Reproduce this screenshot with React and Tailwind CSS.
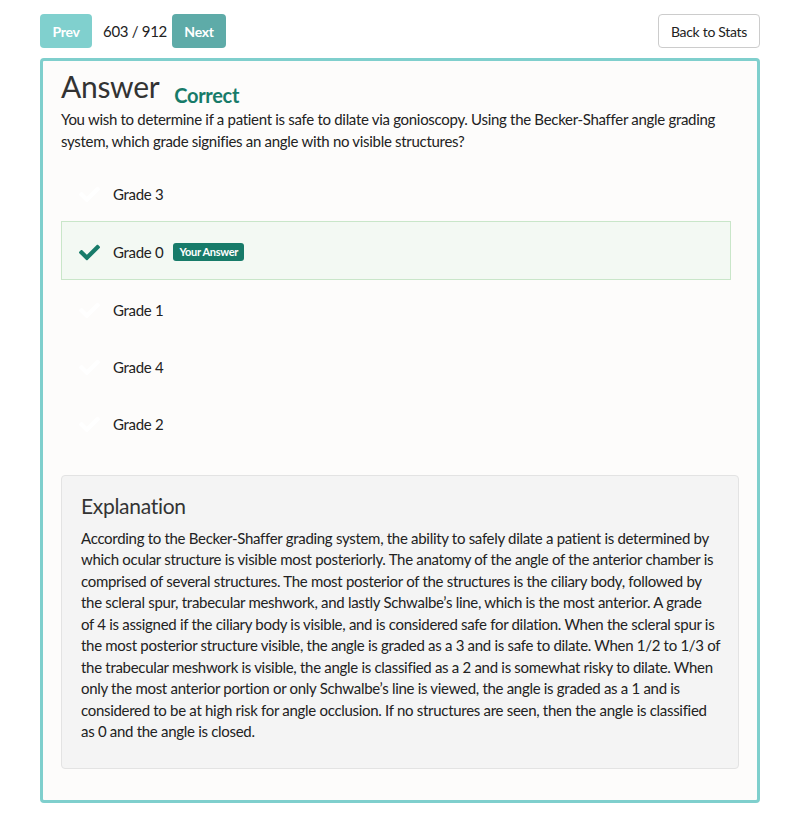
import React from "react";
import { FaCheck } from "react-icons/fa";

const options = [
  { label: "Grade 3" },
  { label: "Grade 0", selected: true },
  { label: "Grade 1" },
  { label: "Grade 4" },
  { label: "Grade 2" },
];

const explanation = [
  "According to the Becker-Shaffer grading system, the ability to safely dilate a patient is determined by",
  "which ocular structure is visible most posteriorly. The anatomy of the angle of the anterior chamber is",
  "comprised of several structures. The most posterior of the structures is the ciliary body, followed by",
  "the scleral spur, trabecular meshwork, and lastly Schwalbe’s line, which is the most anterior. A grade",
  "of 4 is assigned if the ciliary body is visible, and is considered safe for dilation. When the scleral spur is",
  "the most posterior structure visible, the angle is graded as a 3 and is safe to dilate. When 1/2 to 1/3 of",
  "the trabecular meshwork is visible, the angle is classified as a 2 and is somewhat risky to dilate. When",
  "only the most anterior portion or only Schwalbe’s line is viewed, the angle is graded as a 1 and is",
  "considered to be at high risk for angle occlusion. If no structures are seen, then the angle is classified",
  "as 0 and the angle is closed.",
];

export default function App() {
  return (
    <div className="w-[800px] min-h-[826px] bg-white text-[#333] tracking-[-0.3px]" style={{ fontFamily: "Lato, 'Open Sans', sans-serif" }}>
      <div className="px-[40px] pt-[14px]">
        <div className="flex items-center justify-between h-[34px]">
          <div className="flex items-center">
            <button className="h-[34px] w-[52px] rounded-[4px] bg-[#80d0ce] text-white font-bold text-[14px]">Prev</button>
            <span className="ml-[11px] w-[69px] text-[15px] text-[#222]">603 / 912</span>
            <button className="h-[34px] w-[54px] rounded-[4px] bg-[#5eaba8] text-white font-bold text-[14px]">Next</button>
          </div>
          <button className="h-[34px] w-[102px] rounded-[4px] border border-[#ccc] bg-white text-[14px] text-[#222]">Back to Stats</button>
        </div>
        <div className="mt-[10px] border-[3px] border-[#7fcfcd] rounded-[4px] bg-[#fdfcfb] pl-[18px] pr-[18px] pt-[7px] pb-[31px]">
          <div className="flex items-end">
            <h1 className="text-[30px] leading-[36px] text-[#333]">Answer</h1>
            <span className="ml-[15px] mb-[-6px] text-[20px] font-bold text-[#177b69]">Correct</span>
          </div>
          <p className="mt-[4px] text-[15px] leading-[22px] text-[#222] pr-[10px]">
            You wish to determine if a patient is safe to dilate via gonioscopy. Using the Becker-Shaffer angle grading system, which grade signifies an angle with no visible structures?
          </p>
          <div className="mt-[14px] w-[670px]">
            {options.map((o) => (
              <div
                key={o.label}
                className={
                  "flex items-center pl-[17px] " +
                  (o.selected
                    ? "bg-[#f3f9f3] border border-[#c9e6c9] h-[59px] mt-[-2px] mb-[2px] pt-[3px]"
                    : "border border-transparent h-[57px]")
                }
              >
                <FaCheck className={"text-[21px] " + (o.selected ? "text-[#177b69]" : "text-white")} />
                <span className="ml-[13px] text-[15px] text-[#222]">{o.label}</span>
                {o.selected && (
                  <span className="ml-[10px] rounded-[3px] bg-[#177b69] px-[6px] py-[2px] text-[11px] font-bold text-white leading-[14px]">
                    Your Answer
                  </span>
                )}
              </div>
            ))}
          </div>
          <div className="mt-[22px] w-[678px] rounded-[4px] border border-[#e3e3e3] bg-[#f4f4f4] pl-[19px] pr-[12px] pt-[17px] pb-[25px]">
            <h2 className="text-[21px] leading-[26px] text-[#333]">Explanation</h2>
            <p className="mt-[9px] text-[15px] leading-[21.45px] text-[#222]">
              {explanation.map((line, i) => (
                <span key={i} className="block whitespace-nowrap">{line}</span>
              ))}
            </p>
          </div>
        </div>
      </div>
    </div>
  );
}
